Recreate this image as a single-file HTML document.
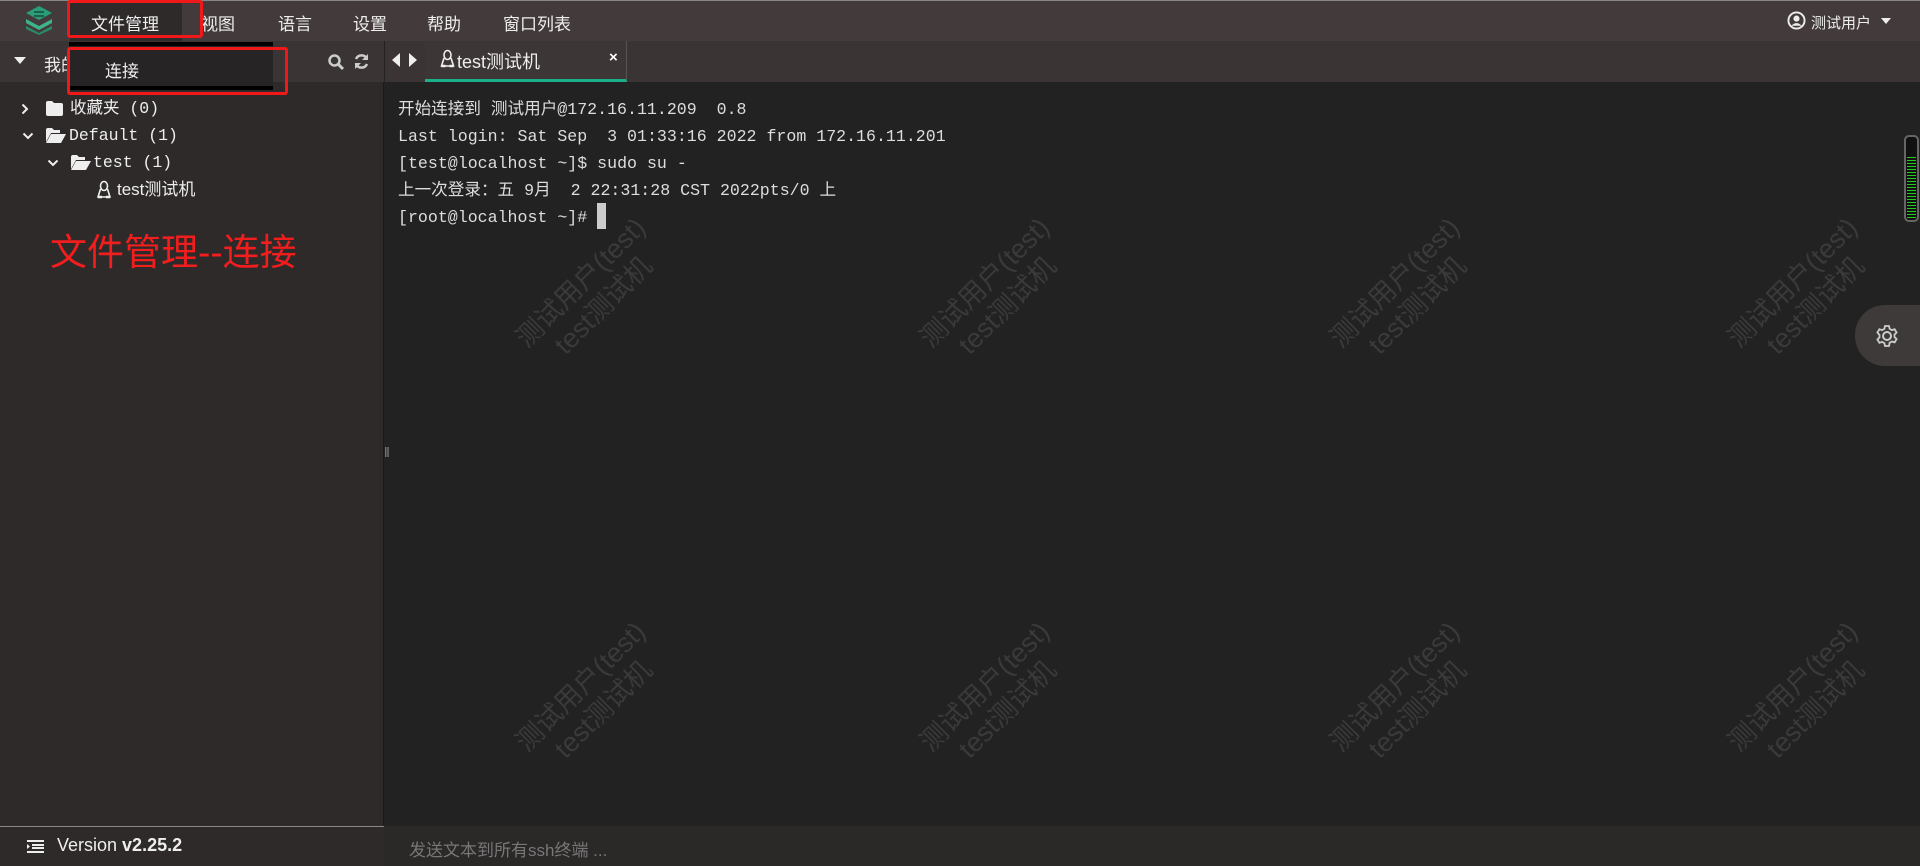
<!DOCTYPE html>
<html><head><meta charset="utf-8"><style>
*{margin:0;padding:0;box-sizing:border-box}
body{width:1920px;height:866px;overflow:hidden;background:#222;font-family:"Liberation Sans","Noto Sans CJK SC",sans-serif;color:#ddd;position:relative}
.abs{position:absolute}
.top{left:0;top:0;width:1920px;height:41px;background:#433b3b;border-top:1px solid #888}
.menu{top:10px;font-size:17px;color:#eee}
.bar2{left:0;top:41px;width:1920px;height:41px;background:#3a3434}
.side{left:0;top:82px;width:384px;height:784px;background:#2e2a2a;border-right:1px solid #1a1a1a}
.mono{font-family:"Liberation Mono","Noto Sans CJK SC",monospace}
.tree{font-size:16.5px;color:#eee;line-height:22px;height:22px;white-space:pre}
.term{left:398px;font-size:16.6px;color:#ddd;white-space:pre;line-height:27px;height:27px}
.wm{color:#3a3a3a;font-size:27px;text-align:center;transform:rotate(-45deg);line-height:32px;width:260px}
</style></head><body>
<div class="abs top"></div>
<svg class="abs" style="left:24px;top:4px" width="30" height="32" viewBox="0 0 30 32"><path d="M15 2 L28 9 L15 16 L2 9Z" fill="#2a9d7a"/><path d="M2 15 L15 22 L28 15 L28 19 L15 26 L2 19Z" fill="#3cb38a"/><path d="M2 22 L15 29 L28 22 L28 25 L15 31 L2 25Z" fill="#2a8d6a"/><path d="M10 8 h10 M10 12h10" stroke="#1d5f48" stroke-width="2"/></svg>
<div class="abs" style="left:70px;top:3px;width:112px;height:38px;background:#2f2a2a"></div>
<div class="abs menu" style="left:91px">文件管理</div>
<div class="abs menu" style="left:201px">视图</div>
<div class="abs menu" style="left:278px">语言</div>
<div class="abs menu" style="left:353px">设置</div>
<div class="abs menu" style="left:427px">帮助</div>
<div class="abs menu" style="left:503px">窗口列表</div>
<svg class="abs" style="left:1787px;top:11px" width="19" height="19" viewBox="0 0 20 20"><circle cx="10" cy="10" r="8.5" fill="none" stroke="#eee" stroke-width="2"/><circle cx="10" cy="8" r="3.2" fill="#eee"/><path d="M4.5 15.5 Q10 10 15.5 15.5" fill="#eee"/></svg>
<div class="abs" style="left:1811px;top:12px;font-size:15px;color:#eee">测试用户</div>
<div class="abs" style="left:1881px;top:18px;border:5px solid transparent;border-top:6px solid #eee"></div>
<div class="abs bar2"></div>
<div class="abs side"></div>
<div class="abs" style="left:14px;top:57px;border:6px solid transparent;border-top:7px solid #eee"></div>
<div class="abs" style="left:44px;top:51px;font-size:17px;color:#eee">我的</div>
<svg class="abs" style="left:327px;top:53px" width="18" height="18" viewBox="0 0 18 18"><circle cx="7.5" cy="7.5" r="5" fill="none" stroke="#ccc" stroke-width="2.5"/><path d="M11 11 L16 16" stroke="#ccc" stroke-width="3"/></svg>
<svg class="abs" style="left:353px;top:53px" width="17" height="17" viewBox="0 0 17 17"><path d="M14 6 A6 6 0 0 0 3 6 M3 11 A6 6 0 0 0 14 11" fill="none" stroke="#ccc" stroke-width="2.5"/><path d="M15 1 v6 h-6z M2 16 v-6 h6z" fill="#ccc"/></svg>
<div class="abs" style="left:384px;top:41px;width:1px;height:41px;background:#222"></div>
<div class="abs" style="left:392px;top:53px;border:7px solid transparent;border-right:8px solid #eee;border-left:0"></div>
<div class="abs" style="left:409px;top:53px;border:7px solid transparent;border-left:8px solid #eee;border-right:0"></div>
<div class="abs" style="left:425px;top:41px;width:202px;height:41px;background:#3d3636;border-right:1px solid #555;border-bottom:3px solid #1bb089"></div>
<svg class="abs" style="left:440px;top:49px" width="15" height="20" viewBox="0 0 14 20"><ellipse cx="7" cy="6" rx="3.5" ry="4.5" fill="none" stroke="#eee" stroke-width="1.6"/><path d="M3.5 9 L1 17 H13 L10.5 9" fill="none" stroke="#eee" stroke-width="1.6"/><path d="M1 17 h4 M9 17 h4" stroke="#eee" stroke-width="2.5"/></svg>
<div class="abs" style="left:457px;top:48px;font-size:18px;color:#eee">test测试机</div>
<div class="abs" style="left:609px;top:49px;font-size:15px;color:#fff;font-weight:bold">×</div>
<!-- dropdown -->
<div class="abs" style="left:69px;top:42px;width:204px;height:48px;background:#262424;border-top:4px solid #000;border-bottom:4px solid #000"></div>
<div class="abs" style="left:105px;top:57px;font-size:17px;color:#eee">连接</div>
<div class="abs" style="left:67px;top:0;width:136px;height:38px;border:3px solid #f01818;border-radius:3px"></div>
<div class="abs" style="left:67px;top:47px;width:221px;height:48px;border:3px solid #f01818;border-radius:3px"></div>
<!-- tree -->
<svg class="abs" style="left:21px;top:103px" width="8" height="12" viewBox="0 0 8 12"><path d="M1.5 1.5 L6 6 L1.5 10.5" fill="none" stroke="#eee" stroke-width="2"/></svg>
<svg class="abs" style="left:46px;top:101px" width="17" height="15" viewBox="0 0 17 15"><path d="M0 2 Q0 0 2 0 H6 L8 2 H15 Q17 2 17 4 V13 Q17 15 15 15 H2 Q0 15 0 13Z" fill="#eee"/></svg>
<div class="abs tree mono" style="left:70px;top:98px">收藏夹 (0)</div>
<svg class="abs" style="left:22px;top:132px" width="12" height="8" viewBox="0 0 12 8"><path d="M1.5 1.5 L6 6 L10.5 1.5" fill="none" stroke="#eee" stroke-width="2"/></svg>
<svg class="abs" style="left:46px;top:128px" width="20" height="15" viewBox="0 0 20 15"><path d="M0 2 Q0 0 2 0 H6 L8 2 H14 V5 H5 L0 14Z M5 6 H20 L15 15 H0Z" fill="#eee"/></svg>
<div class="abs tree mono" style="left:69px;top:125px">Default (1)</div>
<svg class="abs" style="left:47px;top:159px" width="12" height="8" viewBox="0 0 12 8"><path d="M1.5 1.5 L6 6 L10.5 1.5" fill="none" stroke="#eee" stroke-width="2"/></svg>
<svg class="abs" style="left:71px;top:155px" width="20" height="15" viewBox="0 0 20 15"><path d="M0 2 Q0 0 2 0 H6 L8 2 H14 V5 H5 L0 14Z M5 6 H20 L15 15 H0Z" fill="#eee"/></svg>
<div class="abs tree mono" style="left:93px;top:152px">test (1)</div>
<svg class="abs" style="left:97px;top:180px" width="14" height="20" viewBox="0 0 14 20"><ellipse cx="7" cy="6" rx="3.5" ry="4.5" fill="none" stroke="#eee" stroke-width="1.6"/><path d="M3.5 9 L1 17 H13 L10.5 9" fill="none" stroke="#eee" stroke-width="1.6"/><path d="M1 17 h4 M9 17 h4" stroke="#eee" stroke-width="2.5"/></svg>
<div class="abs tree" style="left:117px;top:179px;font-size:17px">test测试机</div>
<div class="abs" style="left:50px;top:222px;font-size:37px;color:#f21d1d">文件管理--连接</div>
<!-- terminal -->
<div class="abs term mono" style="top:96px">开始连接到 测试用户@172.16.11.209  0.8</div>
<div class="abs term mono" style="top:123px">Last login: Sat Sep  3 01:33:16 2022 from 172.16.11.201</div>
<div class="abs term mono" style="top:150px">[test@localhost ~]$ sudo su -</div>
<div class="abs term mono" style="top:177px">上一次登录：五 9月  2 22:31:28 CST 2022pts/0 上</div>
<div class="abs term mono" style="top:204px">[root@localhost ~]#</div>
<div class="abs" style="left:597px;top:203px;width:9px;height:26px;background:#ccc"></div>
<!-- watermarks -->
<div class="abs wm" style="left:462px;top:262px">测试用户(test)<br>test测试机</div>
<div class="abs wm" style="left:866px;top:262px">测试用户(test)<br>test测试机</div>
<div class="abs wm" style="left:1276px;top:262px">测试用户(test)<br>test测试机</div>
<div class="abs wm" style="left:1674px;top:262px">测试用户(test)<br>test测试机</div>
<div class="abs wm" style="left:462px;top:666px">测试用户(test)<br>test测试机</div>
<div class="abs wm" style="left:866px;top:666px">测试用户(test)<br>test测试机</div>
<div class="abs wm" style="left:1276px;top:666px">测试用户(test)<br>test测试机</div>
<div class="abs wm" style="left:1674px;top:666px">测试用户(test)<br>test测试机</div>
<!-- scroll widget -->
<div class="abs" style="left:1904px;top:135px;width:15px;height:87px;background:#111;border:2px solid #666;border-radius:5px;background-image:repeating-linear-gradient(to bottom,#2c2 0 1px,transparent 1px 3px);background-size:9px 64px;background-position:1px 20px;background-repeat:no-repeat"></div>
<div class="abs" style="left:1855px;top:305px;width:65px;height:61px;background:#3f3a3a;border-radius:30px 0 0 30px"></div>
<svg class="abs" style="left:1875px;top:324px" width="24" height="24" viewBox="0 0 24 24"><circle cx="12" cy="12" r="4" fill="none" stroke="#ccc" stroke-width="2"/><path d="M10 2h4l.6 2.8 2.3 1.3 2.7-.9 2 3.4-2.1 1.9v2.6l2.1 1.9-2 3.4-2.7-.9-2.3 1.3L14 22h-4l-.6-2.8-2.3-1.3-2.7.9-2-3.4 2.1-1.9v-2.6L2.4 8.6l2-3.4 2.7.9 2.3-1.3z" fill="none" stroke="#ccc" stroke-width="1.8"/></svg>
<div class="abs" style="left:384px;top:444px;font-size:14px;color:#888">‖</div>
<!-- bottom -->
<div class="abs" style="left:0;top:826px;width:384px;height:1px;background:#888"></div>
<div class="abs" style="left:0;top:827px;width:384px;height:39px;background:#2e2a2a"></div>
<div class="abs" style="left:384px;top:826px;width:1536px;height:40px;background:#2b2828"></div>
<svg class="abs" style="left:27px;top:840px" width="17" height="13" viewBox="0 0 17 13"><path d="M0 1h17M5 5h12M5 8h12M0 12h17" stroke="#eee" stroke-width="2"/><path d="M0 4 L3 6.5 L0 9Z" fill="#eee"/></svg>
<div class="abs" style="left:57px;top:835px;font-size:18px;color:#eee">Version <b>v2.25.2</b></div>
<div class="abs" style="left:409px;top:836px;font-size:17px;color:#777">发送文本到所有ssh终端 ...</div>
</body></html>
